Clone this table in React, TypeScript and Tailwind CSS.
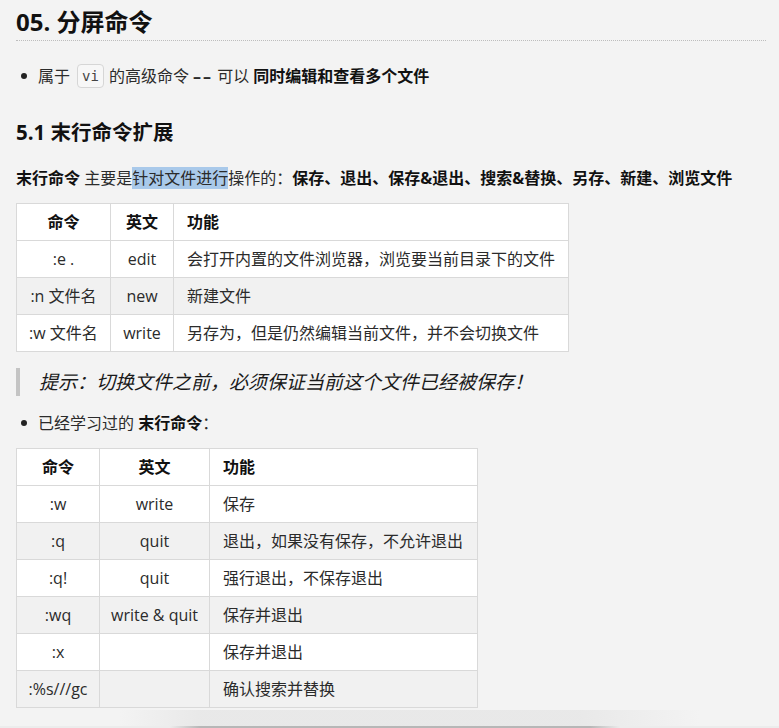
import React from 'react';

type Row = { cmd: string; en: string; desc: string };

const extRows: Row[] = [
  { cmd: ':e .', en: 'edit', desc: '会打开内置的文件浏览器，浏览要当前目录下的文件' },
  { cmd: ':n 文件名', en: 'new', desc: '新建文件' },
  { cmd: ':w 文件名', en: 'write', desc: '另存为，但是仍然编辑当前文件，并不会切换文件' },
];

const learnedRows: Row[] = [
  { cmd: ':w', en: 'write', desc: '保存' },
  { cmd: ':q', en: 'quit', desc: '退出，如果没有保存，不允许退出' },
  { cmd: ':q!', en: 'quit', desc: '强行退出，不保存退出' },
  { cmd: ':wq', en: 'write & quit', desc: '保存并退出' },
  { cmd: ':x', en: '', desc: '保存并退出' },
  { cmd: ':%s///gc', en: '', desc: '确认搜索并替换' },
];

function CmdTable({ rows, widths, width }: { rows: Row[]; widths: string[]; width: string }) {
  const cell = 'border border-[#d9d9d9] h-[37px] p-0 align-middle';
  return (
    <table className={`${width} border-collapse text-[16px] leading-[24px] text-[#2b2b2b] table-fixed`}>
      <colgroup>
        <col className={widths[0]} />
        <col className={widths[1]} />
        <col className={widths[2]} />
      </colgroup>
      <thead>
        <tr className="bg-white">
          <th className={`${cell} text-center font-bold text-[#111]`}>命令</th>
          <th className={`${cell} text-center font-bold text-[#111]`}>英文</th>
          <th className={`${cell} text-left pl-[13px] font-bold text-[#111]`}>功能</th>
        </tr>
      </thead>
      <tbody>
        {rows.map((r, i) => (
          <tr key={r.cmd} className={i % 2 === 1 ? 'bg-[#f1f1f1]' : 'bg-white'}>
            <td className={`${cell} text-center whitespace-nowrap`}>{r.cmd}</td>
            <td className={`${cell} text-center whitespace-nowrap`}>{r.en}</td>
            <td className={`${cell} text-left pl-[13px] whitespace-nowrap`}>{r.desc}</td>
          </tr>
        ))}
      </tbody>
    </table>
  );
}

function Bullet() {
  return (
    <span className="w-[22px] pl-[5px] flex items-center">
      <span className="w-[6px] h-[6px] rounded-full bg-[#222]" />
    </span>
  );
}

export default function App() {
  return (
    <div
      className="h-[728px] overflow-hidden flex flex-col bg-[#f3f3f3] text-[#2b2b2b]"
      style={{ fontFamily: '"Open Sans", "Noto Sans CJK SC", sans-serif' }}
    >
      <div className="pl-4 pr-[13px]">
        {/* Title */}
        <h1 className="pt-[6px] pb-[2px] text-[24px] leading-[32px] font-bold text-[#111] border-b border-dotted border-[#bdbdbd]">
          05. 分屏命令
        </h1>

        <ul className="mt-[23px]">
          <li className="flex items-center text-[16px] leading-[24px]">
            <Bullet />
            <span>属于</span>
            <code
              className="ml-[7px] mr-[5px] px-[4px] h-[24px] leading-[22px] inline-block rounded-[4px] border border-[#d6d6d6] bg-[#f7f7f7] text-[14px] text-[#444]"
              style={{ fontFamily: '"DejaVu Sans Mono", monospace' }}
            >
              vi
            </code>
            <span>的高级命令 <span className="tracking-[2px] font-bold">––</span> 可以 </span>
            <b className="text-[#111] ml-[4px]">同时编辑和查看多个文件</b>
          </li>
        </ul>

        <h2 className="mt-[30px] text-[20.5px] leading-[28px] font-bold text-[#111]">5.1 末行命令扩展</h2>

        <p className="mt-[20px] text-[16px] leading-[24px] whitespace-nowrap">
          <b className="text-[#111]">末行命令</b> 主要是
          <span className="bg-[#a9c9ea]">针对文件进行</span>操作的：
          <b className="text-[#111]">保存、退出、保存&amp;退出、搜索&amp;替换、另存、新建、浏览文件</b>
        </p>

        <div className="mt-[13px]">
          <CmdTable rows={extRows} widths={['w-[94px]', 'w-[63px]', 'w-[395px]']} width="w-[552px]" />
        </div>

        <blockquote className="mt-[16px] border-l-4 border-[#c4c4c4] pl-[19px] h-[28px] flex items-center">
          <em className="text-[19px] leading-[28px] text-[#1a1a1a]">提示：切换文件之前，必须保证当前这个文件已经被保存！</em>
        </blockquote>

        <ul className="mt-[15px]">
          <li className="flex items-center text-[16px] leading-[24px]">
            <Bullet />
            <span>已经学习过的&nbsp;</span>
            <b className="text-[#111]">末行命令</b>
            <span>：</span>
          </li>
        </ul>

        <div className="mt-[13px]">
          <CmdTable rows={learnedRows} widths={['w-[83px]', 'w-[110px]', 'w-[268px]']} width="w-[461px]" />
        </div>
      </div>

      {/* window bottom edge shadow */}
      <div className="mt-auto h-[16px] bg-[linear-gradient(to_right,transparent_0px,transparent_120px,#e6e6e6_200px,#e6e6e6_580px,transparent_700px)] opacity-80" />
      <div className="h-[2px] bg-[linear-gradient(to_right,#ececec_0px,#ececec_170px,#b7b7b7_200px,#b7b7b7_590px,#ececec_620px,#ececec_779px)]" />
    </div>
  );
}
